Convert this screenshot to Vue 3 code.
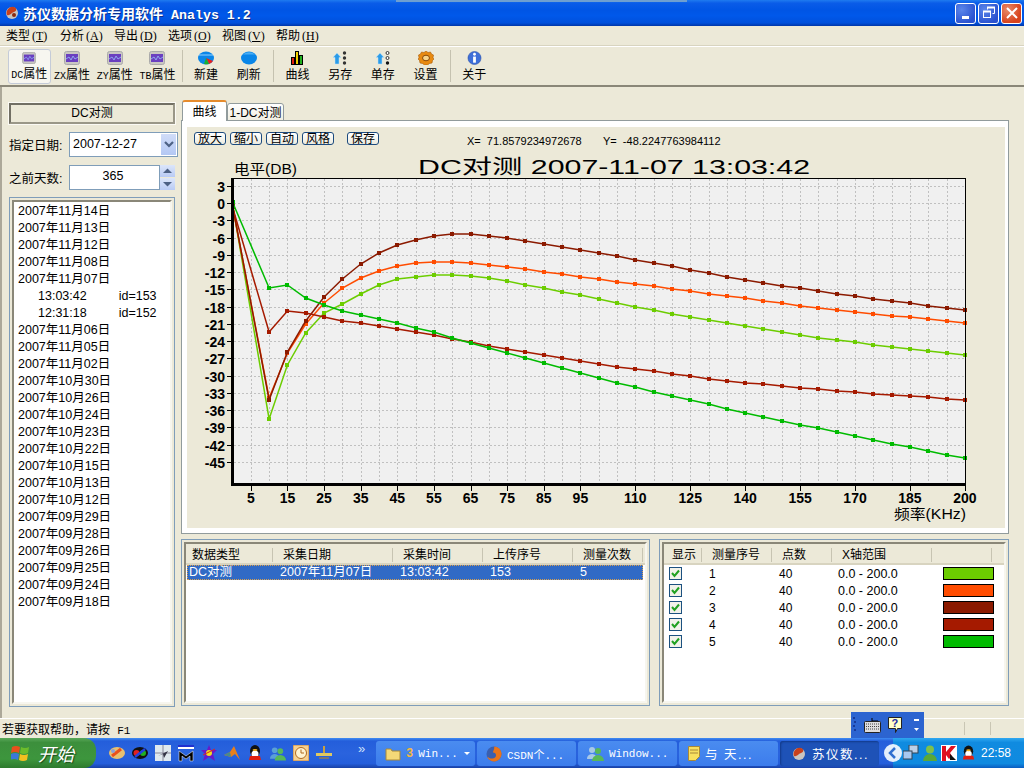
<script setup>
const menus = [
  ['类型', 'T'],
  ['分析', 'A'],
  ['导出', 'D'],
  ['选项', 'O'],
  ['视图', 'V'],
  ['帮助', 'H'],
]

const dates = [
  '2007年11月14日', '2007年11月13日', '2007年11月12日', '2007年11月08日', '2007年11月07日',
  { time: '13:03:42', id: 'id=153' },
  { time: '12:31:18', id: 'id=152' },
  '2007年11月06日', '2007年11月05日', '2007年11月02日', '2007年10月30日', '2007年10月26日',
  '2007年10月24日', '2007年10月23日', '2007年10月22日', '2007年10月15日', '2007年10月13日',
  '2007年10月12日', '2007年09月29日', '2007年09月28日', '2007年09月26日', '2007年09月25日',
  '2007年09月24日', '2007年09月18日',
]

const chartButtons = ['放大', '缩小', '自动', '风格']

// x of a frequency in kHz, y of a level in dB
const xOf = (k) => 232.5 + k * 3.662
const yOf = (db) => 204 - db * 5.75

const freqs = [0]
for (let k = 10; k <= 200; k += 5) freqs.push(k)

const gridX = []
for (let k = 5; k < 200; k += 5) gridX.push(Math.round(xOf(k)) + 0.5)

const levels = []
for (let db = 3; db >= -45; db -= 3) levels.push(db)

const xLabels = [5, 15, 25, 35, 45, 55, 65, 75, 85, 95, 110, 125, 140, 155, 170, 185, 200]

const series = [
  {
    color: '#6ccd00',
    ys: [205, 420, 366, 334, 314, 305, 295, 286, 280, 278, 276, 276, 277, 279, 282, 286, 289, 293, 296, 300,
      304, 308, 311, 315, 318, 321, 324, 327, 330, 333, 336, 339, 341, 343, 346, 348, 350, 352, 354, 356],
  },
  {
    color: '#ff4c00',
    ys: [207, 399, 354, 325, 304, 289, 279, 272, 267, 264, 263, 263, 264, 266, 268, 270, 273, 275, 278, 280,
      283, 285, 287, 290, 292, 295, 297, 299, 302, 304, 307, 309, 311, 313, 315, 317, 318, 320, 322, 324],
  },
  {
    color: '#8b1a00',
    ys: [206, 401, 353, 322, 298, 280, 265, 254, 246, 241, 237, 235, 235, 237, 239, 242, 245, 248, 251, 254,
      257, 261, 264, 267, 271, 274, 278, 281, 284, 287, 289, 292, 295, 297, 300, 302, 304, 307, 309, 311],
  },
  {
    color: '#a51a00',
    ys: [208, 333, 312, 314, 318, 322, 324, 327, 330, 333, 336, 340, 343, 347, 350, 353, 356, 359, 362, 365,
      368, 370, 372, 375, 377, 380, 382, 384, 385, 387, 389, 390, 392, 393, 395, 396, 397, 398, 400, 401],
  },
  {
    color: '#00bb00',
    ys: [203, 289, 286, 299, 306, 312, 316, 320, 324, 329, 333, 339, 344, 349, 354, 359, 364, 369, 374, 379,
      384, 388, 393, 397, 401, 405, 410, 414, 418, 422, 426, 429, 433, 437, 441, 445, 448, 452, 456, 459],
  },
].map((s) => ({
  color: s.color,
  line: s.ys.map((y, i) => `${xOf(freqs[i]).toFixed(1)},${y}`).join(' '),
  marks: s.ys.map((y, i) => ({ x: Math.round(xOf(freqs[i])) - 2, y: y - 2 })),
}))

const measures = [
  { no: 1, color: '#6ccd00' },
  { no: 2, color: '#ff4c00' },
  { no: 3, color: '#8b1a00' },
  { no: 4, color: '#a51a00' },
  { no: 5, color: '#00bb00' },
]
</script>

<template>
  <div class="desktop">
    <div class="top-strip"></div>

    <header class="titlebar">
      <svg class="app-icon" width="16" height="16" viewBox="0 0 16 16">
        <circle cx="8" cy="8" r="6" fill="#c9c4c0" />
        <path d="M3 10a6 6 0 0 1 7-8c3 1 3 4 0 5-3 1-4 4-7 3z" fill="#c8401c" />
        <circle cx="10" cy="10" r="2" fill="#8a2a10" />
      </svg>
      <span class="title-text"><span class="title-cjk">苏仪数据分析专用软件</span> Analys 1.2</span>
      <div class="win-buttons">
        <div class="win-btn">
          <svg width="18" height="18" viewBox="0 0 18 18"><rect x="5" y="12" width="7" height="3" fill="#fff" /></svg>
        </div>
        <div class="win-btn">
          <svg width="18" height="18" viewBox="0 0 18 18" fill="none" stroke="#fff">
            <path d="M7.5 5.5v-2h7v6h-2" stroke-width="1" /><path d="M7 3.5h8" stroke-width="2" />
            <rect x="3.5" y="7.5" width="7" height="6" stroke-width="1" /><path d="M3 7.5h8" stroke-width="2" />
          </svg>
        </div>
        <div class="win-btn win-close">
          <svg width="18" height="18" viewBox="0 0 18 18"><path d="M4 4l10 10M14 4L4 14" stroke="#fff" stroke-width="2" /></svg>
        </div>
      </div>
    </header>

    <nav class="menubar">
      <div v-for="m in menus" :key="m[1]" class="menu-item">
        {{ m[0] }}<span class="menu-key">(<u>{{ m[1] }}</u>)</span>
      </div>
    </nav>

    <div class="toolbar">
      <div class="tool tool-on">
        <svg width="16" height="14" viewBox="0 0 16 14"><rect x=".5" y=".5" width="15" height="13" rx="2" fill="#c9c7c2" stroke="#aaa" /><rect x="2" y="3" width="12" height="8" fill="#6a3fc0" /><path d="M2 8l3-2 2 3 2-4 2 3 3-2" fill="none" stroke="#8fa8f0" /></svg>
        <span><i class="tool-latin">DC</i>属性</span>
      </div>
      <div class="tool">
        <svg width="16" height="14" viewBox="0 0 16 14"><rect x=".5" y=".5" width="15" height="13" rx="2" fill="#c9c7c2" stroke="#aaa" /><rect x="2" y="3" width="12" height="8" fill="#6a3fc0" /><path d="M2 8l3-2 2 3 2-4 2 3 3-2" fill="none" stroke="#8fa8f0" /></svg>
        <span><i class="tool-latin">ZX</i>属性</span>
      </div>
      <div class="tool">
        <svg width="16" height="14" viewBox="0 0 16 14"><rect x=".5" y=".5" width="15" height="13" rx="2" fill="#c9c7c2" stroke="#aaa" /><rect x="2" y="3" width="12" height="8" fill="#6a3fc0" /><path d="M2 8l3-2 2 3 2-4 2 3 3-2" fill="none" stroke="#8fa8f0" /></svg>
        <span><i class="tool-latin">ZY</i>属性</span>
      </div>
      <div class="tool">
        <svg width="16" height="14" viewBox="0 0 16 14"><rect x=".5" y=".5" width="15" height="13" rx="2" fill="#c9c7c2" stroke="#aaa" /><rect x="2" y="3" width="12" height="8" fill="#6a3fc0" /><path d="M2 8l3-2 2 3 2-4 2 3 3-2" fill="none" stroke="#8fa8f0" /></svg>
        <span><i class="tool-latin">TB</i>属性</span>
      </div>
      <div class="tool-sep"></div>
      <div class="tool">
        <svg width="16" height="14" viewBox="0 0 16 14"><ellipse cx="8" cy="7" rx="8" ry="6.5" fill="#0a86e8" /><path d="M8 7l7 3a8 6.5 0 0 1-4 3z" fill="#e82020" /><path d="M8 7l3 6a8 6.5 0 0 1-5 0z" fill="#18b030" /><path d="M1 4h14" stroke="#8fd0ff" /></svg>
        <span>新建</span>
      </div>
      <div class="tool">
        <svg width="16" height="14" viewBox="0 0 16 14"><ellipse cx="8" cy="7" rx="8" ry="6.5" fill="#0a86e8" /><path d="M2 3.5a8 6.5 0 0 1 12 0" fill="#49aef5" /></svg>
        <span>刷新</span>
      </div>
      <div class="tool-sep"></div>
      <div class="tool">
        <svg width="12" height="14" viewBox="0 0 12 14"><rect x=".5" y="6.5" width="3" height="7" fill="#e02010" stroke="#000" /><rect x="4.5" y=".5" width="3" height="13" fill="#f4d000" stroke="#000" /><rect x="8.5" y="4.5" width="3" height="9" fill="#20b020" stroke="#000" /></svg>
        <span>曲线</span>
      </div>
      <div class="tool">
        <svg width="14" height="14" viewBox="0 0 14 14"><path d="M4 2l4 4.500H6V13H2V6.500H0z" fill="#2a9be8" stroke="#bde3fa" stroke-width=".5" /><circle cx="11.500" cy="2" r="1.700" fill="#333" /><circle cx="11.500" cy="7" r="1.700" fill="#333" /><circle cx="11.500" cy="12" r="1.700" fill="#333" /></svg>
        <span>另存</span>
      </div>
      <div class="tool">
        <svg width="14" height="14" viewBox="0 0 14 14"><path d="M4 2l4 4.500H6V13H2V6.500H0z" fill="#2a9be8" stroke="#bde3fa" stroke-width=".5" /><circle cx="11.500" cy="2" r="1.500" fill="#fff" stroke="#333" /><circle cx="11.500" cy="7" r="1.500" fill="#fff" stroke="#333" /><circle cx="11.500" cy="12" r="1.700" fill="#111" /></svg>
        <span>单存</span>
      </div>
      <div class="tool">
        <svg width="16" height="14" viewBox="0 0 16 14"><path d="M8 0l2 1.500 2.500-.5 1 2 2 1-.5 2.500L16 8l-1.500 1.500-.5 2.500-2.500.5L9.500 14h-3l-2-1.500-2.500-.5-.5-2.500L0 8l1-1.500L.5 4l2-1 1-2L6 1.500z" fill="#e88a10" stroke="#a85a08" stroke-width=".6" /><ellipse cx="8" cy="7" rx="3.500" ry="2.800" fill="#f7d48a" stroke="#8a4a08" /></svg>
        <span>设置</span>
      </div>
      <div class="tool-sep"></div>
      <div class="tool">
        <svg width="15" height="15" viewBox="0 0 15 15"><circle cx="7.500" cy="7.500" r="7" fill="#3f6fd8" stroke="#2a50a8" stroke-width=".6" /><circle cx="7.500" cy="3.500" r="1.500" fill="#fff" /><rect x="6" y="6" width="3" height="6.500" fill="#fff" /></svg>
        <span>关于</span>
      </div>
    </div>

    <main class="main">
      <aside class="side">
        <div class="side-title">DC对测</div>
        <div class="field">
          <label>指定日期:</label>
          <div class="input combo">
            <span>2007-12-27</span>
            <div class="combo-btn">
              <svg width="12" height="10" viewBox="0 0 12 10"><path d="M2 2l4 4 4-4" fill="none" stroke="#4d6185" stroke-width="2.200" /></svg>
            </div>
          </div>
        </div>
        <div class="field">
          <label>之前天数:</label>
          <div class="input number">365</div>
          <div class="spin">
            <div class="spin-btn"><svg width="9" height="6" viewBox="0 0 9 6"><path d="M0 5l4.500-4.500L9 5z" fill="#4d6185" /></svg></div>
            <div class="spin-btn"><svg width="9" height="6" viewBox="0 0 9 6"><path d="M0 1l4.500 4.500L9 1z" fill="#4d6185" /></svg></div>
          </div>
        </div>
        <div class="sunken date-list">
          <div class="sunken-in">
            <template v-for="(d, i) in dates" :key="i">
              <div v-if="typeof d === 'string'" class="date-row">{{ d }}</div>
              <div v-else class="date-row date-sub"><span>{{ d.time }}</span><span>{{ d.id }}</span></div>
            </template>
          </div>
        </div>
      </aside>

      <section class="content">
        <div class="tabs">
          <div class="tab tab-on">曲线</div>
          <div class="tab">1-DC对测</div>
        </div>
        <div class="tab-panel">
          <div class="chart-box">
            <div class="chart-tools">
              <button v-for="b in chartButtons" :key="b" class="xp-btn">{{ b }}</button>
              <button class="xp-btn xp-save">保存</button>
              <span class="readout readout-x">X=&nbsp; 71.8579234972678</span>
              <span class="readout readout-y">Y=&nbsp; -48.2247763984112</span>
            </div>
            <svg class="chart" width="818" height="379" viewBox="187 150 818 379">
              <text x="234" y="175" class="axis-name" textLength="63" lengthAdjust="spacingAndGlyphs">电平(DB)</text>
              <text x="418" y="175" class="chart-title" textLength="392" lengthAdjust="spacingAndGlyphs">DC对测 2007-11-07 13:03:42</text>
              <rect x="232" y="179" width="733" height="306" fill="#f0f0f0" />
              <g shape-rendering="crispEdges" stroke="#c0c0c0" stroke-dasharray="2 2">
                <line v-for="x in gridX" :key="'v' + x" :x1="x" y1="180" :x2="x" y2="484" />
                <line v-for="db in levels" :key="'h' + db" x1="234" :y1="Math.round(yOf(db)) + 0.5" x2="965" :y2="Math.round(yOf(db)) + 0.5" />
              </g>
              <g v-for="s in series" :key="s.color">
                <polyline :points="s.line" fill="none" :stroke="s.color" stroke-width="1.500" />
                <rect v-for="(m, i) in s.marks" :key="i" :x="m.x" :y="m.y" width="4" height="4" :fill="s.color" shape-rendering="crispEdges" />
              </g>
              <g shape-rendering="crispEdges" fill="#000">
                <rect x="231" y="179" width="735" height="1" />
                <rect x="965" y="179" width="1" height="307" />
                <rect x="231" y="179" width="3" height="308" />
                <rect x="231" y="484" width="735" height="3" />
                <rect v-for="db in levels" :key="'t' + db" x="227" :y="Math.round(yOf(db))" width="4" height="1" />
                <rect v-for="k in xLabels" :key="'b' + k" :x="Math.round(xOf(k))" y="487" width="1" height="5" />
              </g>
              <text v-for="db in levels" :key="'l' + db" x="225" :y="yOf(db) + 6" class="tick-label" text-anchor="end">{{ db }}</text>
              <text v-for="k in xLabels" :key="'x' + k" :x="xOf(k)" y="504" class="tick-label" text-anchor="middle">{{ k }}</text>
              <text x="894" y="520" class="axis-name" textLength="72" lengthAdjust="spacingAndGlyphs">频率(KHz)</text>
            </svg>
          </div>
        </div>

        <div class="bottom">
          <div class="sunken data-table">
            <div class="sunken-in">
              <div class="head">
                <span class="c1">数据类型</span><span class="c2">采集日期</span><span class="c3">采集时间</span><span class="c4">上传序号</span><span class="c5">测量次数</span>
              </div>
              <div class="row-selected">
                <span class="c1">DC对测</span><span class="c2">2007年11月07日</span><span class="c3">13:03:42</span><span class="c4">153</span><span class="c5">5</span>
              </div>
            </div>
          </div>
          <div class="sunken measure-table">
            <div class="sunken-in">
              <div class="head">
                <span class="m1">显示</span><span class="m2">测量序号</span><span class="m3">点数</span><span class="m4">X轴范围</span><span class="m5"></span>
              </div>
              <div class="measure-rows">
                <div v-for="m in measures" :key="m.no" class="measure-row">
                  <span class="check">
                    <svg width="11" height="11" viewBox="0 0 11 11"><path d="M2 5l2.500 3L9 2.500" fill="none" stroke="#21a121" stroke-width="2" /></svg>
                  </span>
                  <span class="r-no">{{ m.no }}</span>
                  <span class="r-pts">40</span>
                  <span class="r-range">0.0 - 200.0</span>
                  <span class="swatch" :style="{ background: m.color }"></span>
                </div>
              </div>
            </div>
          </div>
        </div>
      </section>
    </main>

    <footer class="statusbar">
      <span>若要获取帮助，请按 <span class="status-latin">F1</span></span>
      <div class="status-cells"><i></i><i></i></div>
    </footer>

    <div class="langbar">
      <svg width="5" height="16" viewBox="0 0 5 16" fill="#173a9a"><rect x="1" y="0" width="2" height="2" /><rect x="2" y="4" width="2" height="2" /><rect x="1" y="8" width="2" height="2" /><rect x="2" y="12" width="2" height="2" /></svg>
      <svg class="lang-kbd" width="17" height="15" viewBox="0 0 17 15"><path d="M8 0v3h6" fill="none" stroke="#000" /><rect x=".5" y="3.500" width="16" height="11" rx="1" fill="#ddd" stroke="#222" /><path d="M2 6h13M2 8.500h13M2 11h13" stroke="#444" stroke-dasharray="1 1" /></svg>
      <svg class="lang-help" width="14" height="16" viewBox="0 0 14 16"><path d="M.5.500h13v11h-4l-2 4v-4h-7z" fill="#ffffc8" stroke="#222" /><text x="3.500" y="10" class="lang-q">?</text></svg>
      <svg class="lang-min" width="5" height="14" viewBox="0 0 5 14" fill="#fff"><rect y="1" width="5" height="2" /><path d="M0 10h5l-2.500 3z" /></svg>
    </div>

    <div class="taskbar">
      <div class="start">
        <svg width="19" height="19" viewBox="0 0 19 19">
          <path d="M1 3q4-2 8 0l-1 6q-4-2-8 0z" fill="#e8501c" /><path d="M10 3q4 2 8 0l-1 6q-4 2-8 0z" fill="#6cbc2c" />
          <path d="M0 10q4-2 8 0l-1 6q-4-2-8 0z" fill="#3c78d8" /><path d="M9 10q4 2 8 0l-1 6q-4 2-8 0z" fill="#f4c020" />
        </svg>
        <span>开始</span>
      </div>
      <div class="quick">
        <svg width="16" height="14" viewBox="0 0 16 14"><ellipse cx="8" cy="7" rx="8" ry="6" fill="#e8c070" /><path d="M3 10L12 3" stroke="#e8501c" stroke-width="3" /><circle cx="4" cy="5" r="2" fill="#8aa0d8" /></svg>
        <svg width="16" height="12" viewBox="0 0 16 12"><ellipse cx="8" cy="6" rx="8" ry="6" fill="#111" /><circle cx="4.500" cy="6" r="3" fill="#e02020" /><circle cx="11" cy="6" r="3" fill="#20b020" /><path d="M3 10l10-8" stroke="#2040e0" stroke-width="2.500" /></svg>
        <svg width="16" height="16" viewBox="0 0 16 16"><rect width="16" height="16" fill="#dfe8ee" /><path d="M8 0v16M0 8h16" stroke="#889" /><path d="M3 11l10-5-4 7-1-4z" fill="#334" /></svg>
        <svg width="16" height="17" viewBox="0 0 16 17"><rect y="0" width="16" height="2" fill="#2030d0" /><rect y="2" width="16" height="2" fill="#fff" /><path d="M1 16V6l7 5 7-5v10h-3v-5l-4 3-4-3v5z" fill="#000" stroke="#fff" stroke-width=".5" /></svg>
        <svg width="16" height="16" viewBox="0 0 16 16"><path d="M8 0l2 5 6 0-4 4 2 7-6-4-6 4 2-7-4-4 6 0z" fill="#6a18c8" /><circle cx="8" cy="8" r="3" fill="#f0e020" /><path d="M2 10l12-6" stroke="#e02020" /></svg>
        <svg width="16" height="16" viewBox="0 0 16 16"><path d="M0 10l6-3 4-6 6 14-5-6-4 3z" fill="#e8801c" /><path d="M0 10l6-3 1 5z" fill="#4a8a8a" /></svg>
        <svg width="16" height="17" viewBox="0 0 16 17"><ellipse cx="8" cy="6" rx="5" ry="6" fill="#111" /><ellipse cx="8" cy="9" rx="3.500" ry="3.500" fill="#fff" /><path d="M3 11h10l1 4H2z" fill="#e02010" /><ellipse cx="8" cy="5" rx="2.500" ry="1" fill="#f0b020" /></svg>
        <svg width="16" height="15" viewBox="0 0 17 15"><circle cx="5" cy="4" r="3" fill="#5aa0d8" /><path d="M0 13a5 5 0 0 1 9-3v3z" fill="#5aa0d8" /><circle cx="11" cy="5" r="3" fill="#58b858" /><path d="M5 15a6 6 0 0 1 12 0z" fill="#58b858" /></svg>
        <svg width="16" height="16" viewBox="0 0 16 16"><rect width="16" height="16" fill="#f6d090" stroke="#c08040" /><circle cx="8" cy="8" r="5.500" fill="#fff2d0" stroke="#b06a20" /><path d="M8 4.500V8h3" fill="none" stroke="#b06a20" /></svg>
        <svg width="16" height="14" viewBox="0 0 16 14"><rect x="7" y="0" width="2" height="8" fill="#c8a040" /><rect x="0" y="7" width="16" height="3" fill="#e0c860" /><rect x="3" y="11" width="10" height="2" fill="#777" /></svg>
      </div>
      <div class="more">»</div>
      <div class="tasks">
        <div class="task">
          <svg width="16" height="14" viewBox="0 0 16 14"><path d="M1 13V2h5l1 2h8v9z" fill="#f4d878" stroke="#a88838" /></svg>
          <b>3</b><span>Win...</span><em></em>
        </div>
        <div class="task">
          <svg width="16" height="16" viewBox="0 0 16 16"><circle cx="8" cy="8" r="7.500" fill="#3a5fb0" /><path d="M8 .5a7.500 7.500 0 1 1-7 10c2 2 6 3 8 1s1-5-2-5c0-2 2-4 1-6z" fill="#e8741c" /></svg>
          <span>CSDN个...</span>
        </div>
        <div class="task">
          <svg width="17" height="15" viewBox="0 0 17 15"><circle cx="5" cy="4" r="3" fill="#a8c8e8" /><path d="M0 13a5 5 0 0 1 9-3v3z" fill="#a8c8e8" /><circle cx="11" cy="5" r="3" fill="#58b858" /><path d="M5 15a6 6 0 0 1 12 0z" fill="#58b858" /></svg>
          <span>Window...</span>
        </div>
        <div class="task">
          <svg width="12" height="15" viewBox="0 0 12 15"><path d="M.5.500h11v10l-4 4h-7z" fill="#f8e060" stroke="#a88838" /><path d="M2 4h8M2 7h8" stroke="#a88838" /></svg>
          <span class="task-cjk">与 天...</span>
        </div>
        <div class="task task-on">
          <svg width="16" height="16" viewBox="0 0 16 16"><circle cx="8" cy="8" r="6" fill="#c9c4c0" /><path d="M3 10a6 6 0 0 1 7-8c3 1 3 4 0 5-3 1-4 4-7 3z" fill="#c8401c" /></svg>
          <span class="task-cjk">苏仪数...</span>
        </div>
      </div>
      <div class="tray">
        <div class="tray-back">
          <svg width="10" height="12" viewBox="0 0 10 12"><path d="M7 1L2 6l5 5" fill="none" stroke="#2f6fd0" stroke-width="2.500" /></svg>
        </div>
        <svg width="16" height="16" viewBox="0 0 16 16"><rect x="6" y="0" width="9" height="8" fill="#bcd0e8" stroke="#345" /><rect x="0" y="6" width="9" height="8" fill="#a8c8f0" stroke="#345" /></svg>
        <svg width="14" height="16" viewBox="0 0 14 16"><circle cx="7" cy="4.500" r="4" fill="#7fc04a" /><path d="M0 16a7 7 0 0 1 14 0z" fill="#5aa838" /></svg>
        <svg width="16" height="16" viewBox="0 0 16 16"><rect width="16" height="16" fill="#fff" /><path d="M1 1h4v6l5-6h5l-6 7 2 3-3 3-3-4v6H1z" fill="#e01020" /><path d="M9 9l6 6H9z" fill="#111" /></svg>
        <svg width="15" height="17" viewBox="0 0 16 17"><ellipse cx="8" cy="6" rx="5" ry="6" fill="#111" /><ellipse cx="8" cy="9" rx="3.500" ry="3.500" fill="#fff" /><path d="M3 11h10l1 4H2z" fill="#e02010" /><ellipse cx="8" cy="5" rx="2.500" ry="1" fill="#f0b020" /></svg>
        <span class="clock">22:58</span>
      </div>
    </div>
  </div>
</template>

<style scoped>
.desktop {
  position: relative;
  width: 1024px;
  height: 768px;
  overflow: hidden;
  display: flex;
  flex-direction: column;
  background: #ece9d8;
  color: #000;
  font: 12px "Liberation Sans", "Noto Sans CJK SC", sans-serif;
}

.top-strip {
  position: absolute;
  left: 396px;
  top: 0;
  width: 291px;
  height: 2px;
  background: #6f9fd0;
  z-index: 2;
}

.titlebar {
  height: 26px;
  flex: none;
  display: flex;
  align-items: center;
  padding-left: 4px;
  background: linear-gradient(#1f7bf0 0, #0a5ce8 12%, #0055e5 40%, #0058ea 60%, #0050dc 88%, #0036a8 100%);
}

.app-icon {
  margin-right: 3px;
}

.title-text {
  color: #fff;
  font: bold 13.3px "Liberation Mono", "Noto Sans CJK SC", monospace;
  text-shadow: 1px 1px 0 #0b2f8c;
  white-space: pre;
}

.title-cjk {
  font-size: 14px;
}

.win-buttons {
  margin-left: auto;
  margin-right: 2px;
  display: flex;
  gap: 2px;
}

.win-btn {
  width: 21px;
  height: 21px;
  box-sizing: border-box;
  border: 1px solid #fff;
  border-radius: 3px;
  display: flex;
  align-items: center;
  justify-content: center;
  background: radial-gradient(circle at 30% 30%, #5b86ea, #2a52d0 75%);
}

.win-close {
  background: radial-gradient(circle at 30% 30%, #e88a6a, #d8431c 70%);
}

.menubar {
  height: 20px;
  flex: none;
  display: flex;
  padding: 0 0 2px 6px;
  box-sizing: border-box;
  align-items: center;
  border-bottom: 1px solid #d8d4c0;
}

.menu-item {
  width: 54px;
  white-space: nowrap;
}

.menu-key {
  margin-left: 2px;
  font: 12px "Liberation Serif", serif;
}

.toolbar {
  height: 41px;
  flex: none;
  display: flex;
  align-items: flex-start;
  padding: 2px 0 0 8px;
  box-sizing: border-box;
  border-top: 1px solid #fff;
  border-bottom: 2px solid #8a8778;
}

.tool {
  width: 42.7px;
  height: 35px;
  box-sizing: border-box;
  padding-top: 2px;
  display: flex;
  flex-direction: column;
  align-items: center;
  justify-content: space-between;
  padding-bottom: 2px;
  flex: none;
  white-space: nowrap;
}

.tool-on {
  background: #f7f6f0;
  border: 1px solid #c4cbd8;
  border-radius: 3px;
}

.tool-latin {
  font: 10px "Liberation Mono", monospace;
}

.tool-sep {
  flex: none;
  width: 1px;
  height: 32px;
  margin: 1px 2px 0 3px;
  background: #c5c2b0;
}

.main {
  height: 631px;
  flex: none;
  display: flex;
  border-left: 2px solid #aca899;
  box-sizing: border-box;
}

.side {
  width: 169px;
  margin-left: 7px;
  padding-top: 16px;
  flex: none;
  display: flex;
  flex-direction: column;
}

.side-title {
  width: 166px;
  height: 21px;
  box-sizing: border-box;
  border: 2px solid;
  border-color: #716f64 #9a9788 #9a9788 #716f64;
  box-shadow: 0 0 0 1px #fbfaf4;
  text-align: center;
  line-height: 17px;
  background: #ece9d8;
}

.field {
  display: flex;
  align-items: center;
  height: 25px;
  margin-top: 8px;
}

.field label {
  width: 60px;
  flex: none;
  font-size: 12.500px;
}

.input {
  height: 25px;
  box-sizing: border-box;
  border: 1px solid #7f9db9;
  background: #fff;
  display: flex;
  align-items: center;
  font-size: 12.500px;
}

.combo {
  width: 109px;
  padding-left: 3px;
  justify-content: space-between;
}

.combo span {
  margin-bottom: 2px;
}

.combo-btn {
  width: 15px;
  height: 21px;
  margin-right: 1px;
  display: flex;
  align-items: center;
  justify-content: center;
  background: linear-gradient(#d0dcf8, #b4c8f4);
}

.number {
  width: 91px;
  justify-content: center;
  padding: 0 3px 3px 0;
}

.spin {
  width: 15px;
  height: 25px;
  display: flex;
  flex-direction: column;
  gap: 1px;
}

.spin-btn {
  flex: 1;
  display: flex;
  align-items: center;
  justify-content: center;
  background: linear-gradient(#dce6fa, #b9cbf5);
}

.sunken {
  box-sizing: border-box;
  border: 1px solid #7f9db9;
  padding: 2px;
  background: #ece9d8;
}

.sunken-in {
  height: 100%;
  box-sizing: border-box;
  border: 2px solid;
  border-color: #8a8778 #f7f6ef #f7f6ef #8a8778;
  background: #fff;
  overflow: hidden;
}

.date-list {
  width: 166px;
  height: 510px;
  margin-top: 7px;
}

.date-list .sunken-in {
  padding-top: 1px;
}

.date-row {
  height: 17px;
  line-height: 17px;
  padding-left: 4px;
  white-space: nowrap;
  font-size: 12.500px;
}

.date-sub {
  display: flex;
  gap: 32px;
  padding-left: 24px;
}

.content {
  width: 828px;
  margin-left: 3px;
  padding-top: 13px;
  flex: none;
  display: flex;
  flex-direction: column;
}

.tabs {
  height: 21px;
  display: flex;
  align-items: flex-end;
  padding-left: 1px;
  position: relative;
  z-index: 1;
  margin-bottom: -1px;
}

.tab {
  width: 57px;
  height: 18px;
  box-sizing: border-box;
  border: 1px solid #919b9c;
  border-radius: 3px 3px 0 0;
  text-align: center;
  line-height: 18px;
  background: linear-gradient(#fff, #f0eee2);
}

.tab-on {
  width: 45px;
  height: 21px;
  line-height: 21px;
  border-top: 2px solid #e68b2c;
  border-bottom: none;
  background: #fff;
}

.tab-panel {
  height: 414px;
  box-sizing: border-box;
  border: 1px solid #919b9c;
  padding: 6px 3px 5px 5px;
  background: #fff;
}

.chart-box {
  height: 100%;
  background: #ece9d8;
  display: flex;
  flex-direction: column;
}

.chart-tools {
  height: 22px;
  flex: none;
  position: relative;
  display: flex;
  align-items: flex-start;
  gap: 4px;
  padding: 5px 0 0 7px;
  box-sizing: border-box;
}

.xp-btn {
  width: 32px;
  height: 13px;
  padding: 0;
  box-sizing: border-box;
  border: 1px solid #1c4a7e;
  border-radius: 3px;
  background: linear-gradient(#fff, #ecebe0);
  font: 12px/10px "Liberation Sans", "Noto Sans CJK SC", sans-serif;
  color: #000;
}

.xp-save {
  margin-left: 9px;
}

.readout {
  position: absolute;
  top: 8px;
  font-size: 11px;
  white-space: nowrap;
}

.readout-x {
  left: 280px;
}

.readout-y {
  left: 416px;
}

.chart {
  display: block;
}

.axis-name {
  font: 14px "Liberation Sans", "Noto Sans CJK SC", sans-serif;
}

.chart-title {
  font: 20px "Liberation Sans", "Noto Sans CJK SC", sans-serif;
}

.tick-label {
  font: bold 14px "Liberation Sans", sans-serif;
}

.bottom {
  display: flex;
  gap: 9px;
  margin-top: 5px;
  height: 167px;
}

.data-table {
  width: 469px;
}

.measure-table {
  width: 350px;
}

.head {
  height: 19px;
  display: flex;
  align-items: center;
  background: #ece9d8;
  border-bottom: 2px solid #d8d4c0;
}

.head span {
  height: 14px;
  line-height: 14px;
  margin-top: 2px;
  padding-left: 6px;
  box-sizing: border-box;
  border-right: 1px solid #c7c4b2;
  flex: none;
}

.c1, .c2, .c3, .c4, .c5 {
  flex: none;
  box-sizing: border-box;
}

.c1 { width: 87px; }
.c2 { width: 120px; }
.c3 { width: 90px; }
.c4 { width: 90px; }
.c5 { width: 70px; }

.head .c2, .head .c3, .head .c4, .head .c5 {
  padding-left: 10px;
}

.row-selected {
  margin: 0 0 0 1px;
  width: 456px;
  height: 15px;
  line-height: 15px;
  display: flex;
  background: #316ac5;
  color: #fff;
  outline: 1px dotted #d8a050;
  outline-offset: -1px;
  white-space: nowrap;
  font-size: 12.500px;
}

.row-selected .c1 { padding-left: 2px; width: 91px; }
.row-selected span { padding-left: 2px; }

.head .m1 { width: 38px; padding-left: 8px; }
.head .m2 { width: 70px; padding-left: 10px; }
.head .m3 { width: 60px; padding-left: 10px; }
.head .m4 { width: 100px; padding-left: 10px; }
.head .m5 { width: 60px; }

.measure-row {
  height: 17px;
  display: flex;
  align-items: center;
  white-space: nowrap;
}

.check {
  width: 13px;
  height: 13px;
  box-sizing: border-box;
  margin-left: 5px;
  border: 1px solid #1c5180;
  background: #f2f2ea;
  display: flex;
  align-items: center;
  justify-content: center;
  flex: none;
}

.r-no { margin-left: 27px; width: 70px; flex: none; }
.r-pts { width: 59px; flex: none; }
.r-range { width: 105px; flex: none; font-size: 12.500px; }

.swatch {
  width: 51px;
  height: 13px;
  box-sizing: border-box;
  border: 1px solid #000;
  flex: none;
}

.statusbar {
  height: 20px;
  flex: none;
  box-sizing: border-box;
  border-top: 1px solid #fff;
  display: flex;
  align-items: center;
  padding-left: 2px;
  font: 12px "Liberation Mono", "Noto Sans CJK SC", monospace;
}

.status-latin {
  font-size: 11px;
}

.status-cells {
  margin-left: auto;
  margin-right: 33px;
  display: flex;
  gap: 25px;
  align-self: stretch;
  padding: 3px 0;
}

.status-cells i {
  width: 1px;
  background: #c9c6b4;
}

.langbar {
  position: absolute;
  left: 851px;
  top: 712px;
  width: 73px;
  height: 26px;
  box-sizing: border-box;
  background: #2c64d0;
  display: flex;
  align-items: center;
  padding-left: 1px;
  z-index: 3;
}

.lang-kbd {
  margin-left: 7px;
}

.lang-help {
  margin-left: 7px;
}

.lang-q {
  font: bold 11px "Liberation Sans", sans-serif;
  fill: #1a2aa0;
}

.lang-min {
  margin-left: 12px;
}

.taskbar {
  flex: 1;
  display: flex;
  align-items: stretch;
  background: linear-gradient(#3f8cf3 0, #245edb 10%, #2a63de 50%, #245edb 85%, #1941a5 100%);
  color: #fff;
}

.start {
  width: 96px;
  flex: none;
  display: flex;
  align-items: center;
  gap: 8px;
  padding-left: 11px;
  box-sizing: border-box;
  border-radius: 0 12px 12px 0;
  background: linear-gradient(#5aa85a 0, #3c8f3c 15%, #3d963d 70%, #2d7a2d 100%);
  font: italic 18px "Noto Sans CJK SC", sans-serif;
  text-shadow: 1px 1px 1px #1a4a1a;
}

.quick {
  width: 262px;
  flex: none;
  padding-left: 13px;
  box-sizing: border-box;
  display: flex;
  align-items: center;
  gap: 7px;
}

.quick svg {
  flex: none;
}

.more {
  width: 18px;
  flex: none;
  font-size: 13px;
  margin-top: -1px;
  line-height: 24px;
  color: #cfe0fa;
}

.tasks {
  display: flex;
  gap: 2px;
  width: 517px;
  flex: none;
  padding-top: 3px;
}

.task {
  width: 99px;
  height: 25px;
  flex: none;
  box-sizing: border-box;
  border-radius: 3px;
  display: flex;
  align-items: center;
  gap: 5px;
  padding-left: 9px;
  background: linear-gradient(#4a8cf0, #3c7cec);
  font: 11px "Liberation Mono", "Noto Sans CJK SC", monospace;
  white-space: nowrap;
}

.task b {
  color: #f4b840;
  font-size: 12px;
}

.task em {
  margin-left: auto;
  margin-right: 5px;
  border: 3px solid transparent;
  border-top: 3px solid #fff;
  border-bottom: none;
}

.task-cjk {
  font: 12.500px "Liberation Sans", "Noto Sans CJK SC", sans-serif;
  letter-spacing: 1.500px;
}

.task-on {
  background: #1e52b7;
  box-shadow: inset 1px 1px 2px #123a8a;
  padding-left: 11px;
}

.tray {
  flex: 1;
  display: flex;
  align-items: center;
  gap: 4px;
  background: linear-gradient(#2fa8f0 0, #108be0 15%, #0f8ae0 85%, #0a5cc0 100%);
  position: relative;
}

.tray-back {
  width: 18px;
  height: 18px;
  margin-left: -9px;
  margin-right: -3px;
  border-radius: 50%;
  background: #e4effc;
  display: flex;
  align-items: center;
  justify-content: center;
  flex: none;
}

.clock {
  margin-left: 1px;
  font-size: 12px;
}
</style>

<style>
html,
body {
  margin: 0;
}
</style>
